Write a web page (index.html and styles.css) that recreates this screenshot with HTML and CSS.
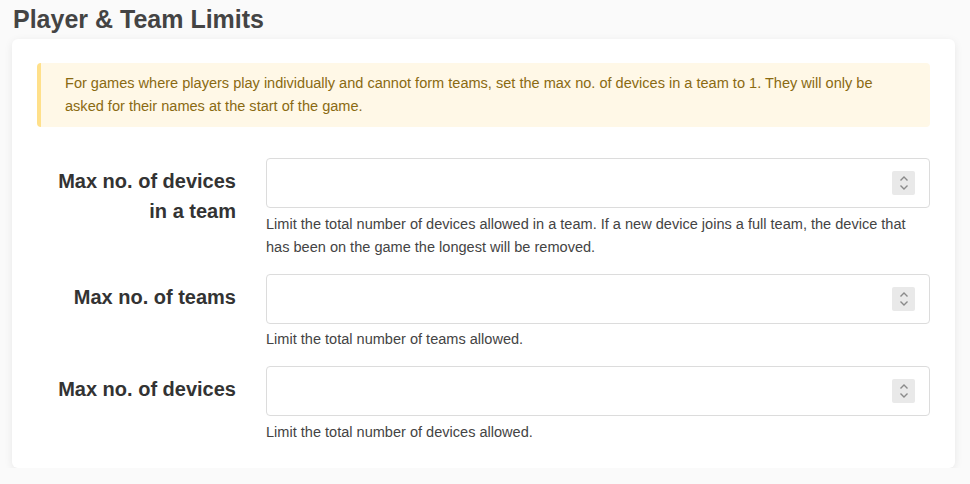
FILE: index.html
```html
<!DOCTYPE html>
<html lang="en">
<head>
    <meta charset="UTF-8">
    <title>Player &amp; Team Limits</title>
    <link rel="stylesheet" href="styles.css">
</head>
<body>
    <h1 class="section-title">Player &amp; Team Limits</h1>

    <div class="card">
        <div class="alert-warning">
            For games where players play individually and cannot form teams, set the max no. of devices in a team to 1. They will only be asked for their names at the start of the game.
        </div>

        <form class="limits-form">
            <div class="form-row">
                <label class="form-label" for="maxTeamDevices">Max no. of devices in a team</label>
                <div class="form-field">
                    <div class="number-input">
                        <input type="number" id="maxTeamDevices">
                        <span class="spinner">
                            <svg width="12" height="18" viewBox="0 0 12 18"><path d="M2.5 6.5 L6 3 L9.5 6.5 M2.5 11.5 L6 15 L9.5 11.5" fill="none" stroke="#8a8a8a" stroke-width="1.4"/></svg>
                        </span>
                    </div>
                    <p class="help-text">Limit the total number of devices allowed in a team. If a new device joins a full team, the device that has been on the game the longest will be removed.</p>
                </div>
            </div>

            <div class="form-row">
                <label class="form-label" for="maxTeams">Max no. of teams</label>
                <div class="form-field">
                    <div class="number-input">
                        <input type="number" id="maxTeams">
                        <span class="spinner">
                            <svg width="12" height="18" viewBox="0 0 12 18"><path d="M2.5 6.5 L6 3 L9.5 6.5 M2.5 11.5 L6 15 L9.5 11.5" fill="none" stroke="#8a8a8a" stroke-width="1.4"/></svg>
                        </span>
                    </div>
                    <p class="help-text">Limit the total number of teams allowed.</p>
                </div>
            </div>

            <div class="form-row">
                <label class="form-label" for="maxDevices">Max no. of devices</label>
                <div class="form-field">
                    <div class="number-input">
                        <input type="number" id="maxDevices">
                        <span class="spinner">
                            <svg width="12" height="18" viewBox="0 0 12 18"><path d="M2.5 6.5 L6 3 L9.5 6.5 M2.5 11.5 L6 15 L9.5 11.5" fill="none" stroke="#8a8a8a" stroke-width="1.4"/></svg>
                        </span>
                    </div>
                    <p class="help-text">Limit the total number of devices allowed.</p>
                </div>
            </div>
        </form>
    </div>
</body>
</html>
```

FILE: styles.css
```css
body {
    font-family: "Liberation Sans", Arial, sans-serif;
    background-color: #fafafa;
    color: #333;
    margin: 0;
    padding: 0 15px 0 12px;
}

.section-title {
    margin: 4px 0 5px 1px;
    font-size: 25px;
    line-height: 30px;
    font-weight: bold;
    color: #444;
}

.card {
    background: white;
    border-radius: 6px;
    box-shadow: 0 2px 8px rgba(0, 0, 0, 0.08);
    padding: 24px 25px 24px 25px;
}

.alert-warning {
    background-color: #fff8e7;
    border-left: 4px solid #ffe08a;
    border-radius: 4px;
    color: #8a6a12;
    font-size: 14.55px;
    line-height: 23px;
    padding: 9px 20px 9px 24px;
}

.limits-form {
    margin-top: 31px;
}

.form-row {
    display: grid;
    grid-template-columns: 199px 1fr;
    column-gap: 30px;
    margin-bottom: 15px;
}

.form-row:last-child {
    margin-bottom: 0;
}

.form-label {
    text-align: right;
    font-size: 20px;
    font-weight: bold;
    line-height: 30px;
    padding-top: 8px;
    color: #333;
}

.number-input {
    display: flex;
    align-items: center;
    height: 50px;
    box-sizing: border-box;
    border: 1px solid #dcdcdc;
    border-radius: 4px;
    padding: 0 14px 0 12px;
    background: white;
}

.number-input input {
    flex: 1;
    border: none;
    outline: none;
    font-size: 16px;
    font-family: inherit;
    background: transparent;
    -moz-appearance: textfield;
}

.number-input input::-webkit-inner-spin-button,
.number-input input::-webkit-outer-spin-button {
    -webkit-appearance: none;
    margin: 0;
}

.spinner {
    display: flex;
    align-items: center;
    justify-content: center;
    width: 23px;
    height: 24px;
    background-color: #e9e9e9;
    border-radius: 2px;
}

.help-text {
    margin: 4.5px 0 0 0;
    font-size: 14.55px;
    line-height: 23px;
    color: #444;
}
```
